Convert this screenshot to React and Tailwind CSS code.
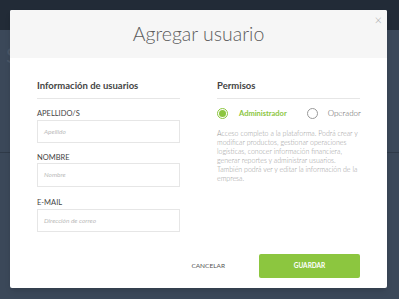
export default function App() {
  return (
    <div className="relative h-[299px] w-[399px] overflow-hidden bg-[#3b4859] font-['Lato',sans-serif]">
      {/* dimmed page behind the modal */}
      <div className="h-[30px] bg-[#222b37]" />
      <div className="mt-[122px] h-px bg-[#2f3a48]" />
      <div className="absolute left-[6px] top-[38px] text-[22px] text-[#4a5666]">S</div>

      <div className="absolute left-[10px] top-[10px] flex h-[278px] w-[377px] flex-col overflow-hidden rounded-[2px] bg-white shadow-md">
        <div className="relative flex h-[48px] items-center justify-center bg-[#f6f6f6]">
          <h1 className="text-[19.5px] font-light text-[#5c5c5c]">Agregar usuario</h1>
          <span className="absolute right-[5px] top-[1px] text-[13px] font-light text-[#aaa]">×</span>
        </div>

        <div className="flex flex-1 gap-[37px] px-[27px] pt-[21px]">
          <div className="w-[143px]">
            <h2 className="border-b border-[#e6e6e6] pb-[5px] text-[9.5px] font-bold text-[#444]">Información de usuarios</h2>
            <div className="mt-[10px] text-[7.5px] leading-[9px] text-[#444]">APELLIDO/S</div>
            <div className="mt-[2px] flex h-[23px] items-center border border-[#e6e6e6] px-[6px] text-[6.5px] italic text-[#bbb]">Apellido</div>
            <div className="mt-[10px] text-[7.5px] leading-[9px] text-[#444]">NOMBRE</div>
            <div className="mt-[1px] flex h-[24px] items-center border border-[#e6e6e6] px-[6px] text-[6.5px] italic text-[#bbb]">Nombre</div>
            <div className="mt-[11px] text-[7.5px] leading-[9px] text-[#444]">E-MAIL</div>
            <div className="mt-[2px] flex h-[23px] items-center border border-[#e6e6e6] px-[6px] text-[6.5px] italic text-[#bbb]">Dirección de correo</div>
          </div>

          <div className="w-[143px]">
            <h2 className="border-b border-[#e6e6e6] pb-[5px] text-[9.5px] font-bold text-[#444]">Permisos</h2>
            <div className="mt-[8px] flex items-center whitespace-nowrap text-[8px]">
              <span className="flex h-[11px] w-[11px] shrink-0 items-center justify-center rounded-full border border-[#8cc63f]">
                <span className="h-[7px] w-[7px] rounded-full bg-[#8cc63f]" />
              </span>
              <span className="ml-[11px] text-[7.5px] font-bold text-[#8cc63f]">Administrador</span>
              <span className="ml-[20px] h-[11px] w-[11px] shrink-0 rounded-full border border-[#999]" />
              <span className="ml-[10px] font-light text-[#555]">Operador</span>
            </div>
            <p className="mt-[10px] whitespace-nowrap text-[7px] font-light leading-[9px] text-[#999]">
              Acceso completo a la plataforma. Podrá crear y<br />
              modificar productos, gestionar operaciones<br />
              logísticas, conocer información financiera,<br />
              generar reportes y administrar usuarios.<br />
              También podrá ver y editar la información de la<br />
              empresa.
            </p>
          </div>
        </div>

        <div className="flex items-center justify-end gap-[34px] pb-[10px] pr-[27px]">
          <span className="text-[6.5px] text-[#555]">CANCELAR</span>
          <button className="h-[24px] w-[101px] rounded-[2px] bg-[#8cc63f] text-[6.5px] font-bold text-white">GUARDAR</button>
        </div>
      </div>
    </div>
  );
}
